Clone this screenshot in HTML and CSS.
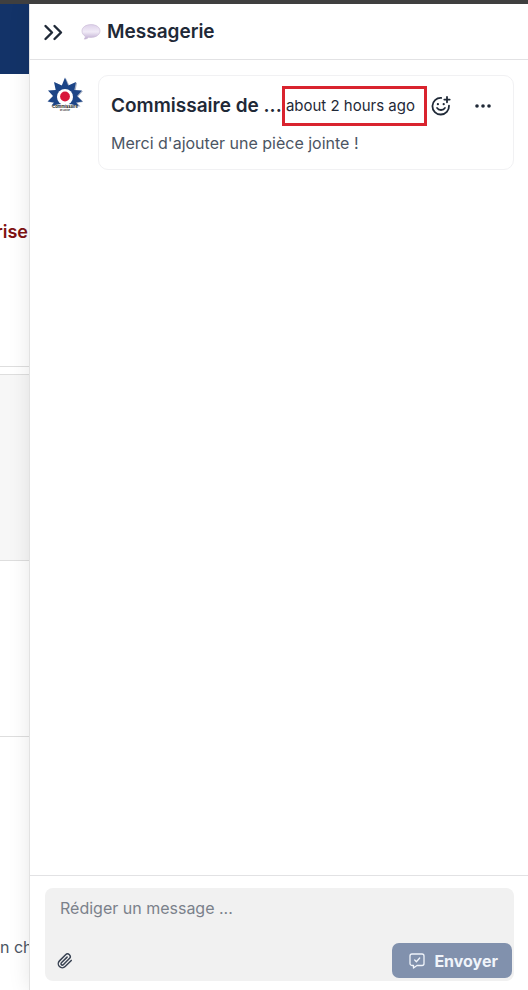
FILE: index.html
```html
<!DOCTYPE html>
<html lang="fr">
<head>
  <meta charset="UTF-8">
  <meta name="viewport" content="width=device-width, initial-scale=1.0">
  <title>Messagerie</title>
  <link rel="stylesheet" href="styles.css">
</head>
<body>
  <div class="topbar"></div>
  <div class="layout">
    <main class="page">
      <div class="banner"></div>
      <section class="section title-section">
        <h2 class="page-title">rise</h2>
      </section>
      <div class="separator"></div>
      <section class="section grey-section"></section>
      <section class="section plain-section"></section>
      <section class="section text-section">
        <p class="page-text">n ch</p>
      </section>
    </main>

    <aside class="panel">
      <header class="panel-header">
        <button class="icon-btn" type="button" aria-label="Fermer">
          <svg width="20" height="20" viewBox="0 0 20 20" fill="none" stroke="currentColor" stroke-width="2.400" stroke-linecap="round" stroke-linejoin="round">
            <path d="M2.500 4L9 10.500 2.500 17M11.500 4l6.500 6.500-6.500 6.500"/>
          </svg>
        </button>
        <svg class="bubble" width="20" height="16" viewBox="0 0 20 16" aria-hidden="true">
          <defs>
            <linearGradient id="bubble-fill" x1="0" y1="0" x2="0" y2="1">
              <stop offset="0" stop-color="#ded2ea"/>
              <stop offset="0.5" stop-color="#f1ebf7"/>
              <stop offset="1" stop-color="#bfadd1"/>
            </linearGradient>
          </defs>
          <path d="M10 .6C4.800.6 1 3.400 1 6.900c0 2.300 1.200 4.200 3.300 5.400.1 1.100-.3 2-1.100 2.800 1.900 0 3.400-.7 4.400-1.900.8.1 1.600.2 2.400.2 5.200 0 9-2.900 9-6.500S15.200.6 10 .6z" fill="url(#bubble-fill)" stroke="#cbbdd9" stroke-width=".7"/>
        </svg>
        <h1 class="panel-title">Messagerie</h1>
      </header>

      <div class="messages">
        <article class="message">
          <svg class="avatar" width="36" height="36" viewBox="0 0 36 36" aria-hidden="true">
            <path d="M19 1.500l3.600 7.600 7.500-3.500-1.500 8 7.500.4-5 5.500 5.500 5.500-6.500 1 3.500 3.500H4l4-3.500-6.500-1 5.500-5.500-5-5.500 7.500-.4-1.500-8 7.500 3.500z" fill="#a9b2c4"/>
            <path d="M18 .5l3.200 8L29 5l-1.700 8 7.700.5-5 5.500 5.500 5.500-6.500 1 2.500 3h-27L7 25.500l-6.500-1L6 19l-5-5.500 7.700-.5L7 5l7.800 3.500z" fill="#1c4587"/>
            <circle cx="18" cy="20" r="8" fill="#fff"/>
            <circle cx="18" cy="19.500" r="4.900" fill="#d8163b"/>
            <path d="M6 28.500Q18 25 30 28.500V32H6z" fill="#fff"/>
            <text class="logo-name" x="18" y="31" text-anchor="middle">Commissaire</text>
            <text class="logo-sub" x="18" y="34" text-anchor="middle">de Justice</text>
          </svg>
          <div class="card">
            <div class="card-header">
              <h3 class="author">Commissaire de ...</h3>
              <time class="date">about 2 hours ago</time>
              <button class="icon-btn" type="button" aria-label="Réagir">
                <svg width="20" height="20" viewBox="0 0 20 20" fill="none" stroke="currentColor" stroke-width="1.800" stroke-linecap="round">
                  <path d="M10.200 1.900A8.300 8.300 0 1 0 18 9.700"/>
                  <path d="M16 .9v5.400M13.300 3.600h5.400"/>
                  <path d="M6 11.900c1.700 2.800 6.300 2.800 8 0"/>
                  <path d="M6.900 8v.2M12.700 8v.2" stroke-width="2.200"/>
                </svg>
              </button>
              <button class="icon-btn more-btn" type="button" aria-label="Plus d'actions">
                <svg width="18" height="18" viewBox="0 0 18 18" fill="currentColor">
                  <circle cx="3" cy="9" r="1.800"/>
                  <circle cx="9" cy="9" r="1.800"/>
                  <circle cx="15" cy="9" r="1.800"/>
                </svg>
              </button>
            </div>
            <p class="card-text">Merci d'ajouter une pièce jointe !</p>
          </div>
        </article>
      </div>

      <form class="composer">
        <div class="composer-box">
          <textarea class="composer-input" rows="1" placeholder="Rédiger un message ..." aria-label="Rédiger un message"></textarea>
          <div class="composer-actions">
            <button class="icon-btn attach-btn" type="button" aria-label="Joindre un fichier">
              <svg width="16" height="16" viewBox="0 0 24 24" fill="none" stroke="currentColor" stroke-width="2.200" stroke-linecap="round" stroke-linejoin="round">
                <path d="M21.400 11.100l-9.200 9.200a6 6 0 0 1-8.500-8.500l9.200-9.200a4 4 0 0 1 5.700 5.700l-9.200 9.200a2 2 0 0 1-2.800-2.900l8.500-8.400"/>
              </svg>
            </button>
            <button class="send-btn" type="submit">
              <svg width="16" height="16" viewBox="0 0 16 16" fill="none" stroke="currentColor" stroke-width="1.300" stroke-linecap="round" stroke-linejoin="round">
                <path d="M3 1h10a2 2 0 0 1 2 2v7.500a2 2 0 0 1-2 2H8L4.500 15v-2.500H3a2 2 0 0 1-2-2V3a2 2 0 0 1 2-2z"/>
                <path d="M5.700 7l1.700 1.700L10.700 5"/>
              </svg>
              Envoyer
            </button>
          </div>
        </div>
      </form>
    </aside>
  </div>
</body>
</html>
```

FILE: styles.css
```css
* {
  box-sizing: border-box;
}

body {
  display: flex;
  flex-direction: column;
  min-height: 100vh;
  margin: 0;
  background: #fff;
  font-family: Inter, "Liberation Sans", sans-serif;
  font-size: 16px;
  line-height: 24px;
  color: #1f2937;
}

h1, h2, h3, p {
  margin: 0;
}

button {
  font-family: inherit;
  border: none;
  cursor: pointer;
}

.topbar {
  height: 4px;
  background: #3f3f3f;
}

.layout {
  display: grid;
  grid-template-columns: 29px 1fr;
  flex: 1;
}

/* Page visible behind the panel */
.page {
  display: flex;
  flex-direction: column;
  overflow: hidden;
}

.banner {
  height: 70px;
  background: #133368;
}

.section {
  border-bottom: 1px solid #dedede;
}

.title-section {
  display: flex;
  justify-content: flex-end;
  height: 293px;
  padding: 146px 1px 0 0;
}

.page-title {
  font-size: 18px;
  font-weight: 600;
  line-height: 24px;
  color: #7f1212;
}

.separator {
  height: 8px;
  border-bottom: 1px solid #dedede;
}

.grey-section {
  height: 186px;
  background: #f7f7f7;
}

.plain-section {
  height: 176px;
}

.text-section {
  flex: 1;
  display: flex;
  align-items: flex-end;
  padding-bottom: 31px;
  border-bottom: none;
}

.page-text {
  color: #4b5563;
  white-space: nowrap;
}

/* Messaging panel */
.panel {
  z-index: 1;
  display: flex;
  flex-direction: column;
  min-width: 0;
  background: #fff;
  border-left: 1px solid #e2e2e2;
  box-shadow: 0 0 20px rgba(0, 0, 0, 0.1);
  clip-path: inset(0 0 0 -30px);
}

.panel-header {
  display: flex;
  align-items: center;
  height: 56px;
  padding: 0 13px;
  border-bottom: 1px solid #e2e2e4;
}

.icon-btn {
  display: flex;
  padding: 0;
  background: none;
  color: #1f2937;
}

.bubble {
  margin-left: 18px;
}

.panel-title {
  margin-left: 6px;
  font-size: 19px;
  font-weight: 600;
  line-height: 24px;
}

.messages {
  flex: 1;
  padding: 15px 14px 15px 17px;
}

.message {
  display: flex;
  align-items: flex-start;
  gap: 15px;
}

.avatar {
  flex: none;
  margin-top: 2px;
}

.logo-name {
  font-size: 4px;
  font-weight: 700;
  fill: #222;
}

.logo-sub {
  font-size: 2px;
  font-weight: 700;
  fill: #333;
}

.card {
  flex: 1;
  min-width: 0;
  padding: 10px 12px 14px;
  border: 1px solid #f1f1f3;
  border-radius: 10px;
}

.card-header {
  display: flex;
  align-items: center;
}

.author {
  flex: 1;
  min-width: 0;
  overflow: hidden;
  font-size: 19px;
  font-weight: 600;
  line-height: 26px;
  white-space: nowrap;
}

.date {
  padding: 5px 9px 5px 1px;
  border: 3px solid #d9232e;
  font-size: 15px;
  white-space: nowrap;
}

.date + .icon-btn {
  margin-left: 4px;
}

.more-btn {
  margin: 0 9px 0 23px;
}

.card-text {
  margin-top: 5px;
  color: #4b5563;
}

.composer {
  padding: 12px 14px 9px 15px;
  border-top: 1px solid #e2e2e4;
}

.composer-box {
  padding: 8px 2px 3px 12px;
  background: #f1f1f1;
  border-radius: 8px;
}

.composer-input {
  display: block;
  width: 100%;
  height: 47px;
  padding: 0 3px;
  border: none;
  outline: none;
  resize: none;
  background: none;
  font: inherit;
}

.composer-input::placeholder {
  color: #7b818b;
}

.composer-actions {
  display: flex;
  align-items: center;
  justify-content: space-between;
}

.attach-btn {
  color: #374151;
}

.send-btn {
  display: flex;
  align-items: center;
  gap: 9px;
  height: 35px;
  padding: 0 14px 0 17px;
  border-radius: 7px;
  background: #8191ad;
  color: #f0f4fa;
  font-size: 16px;
  font-weight: 700;
}
```
